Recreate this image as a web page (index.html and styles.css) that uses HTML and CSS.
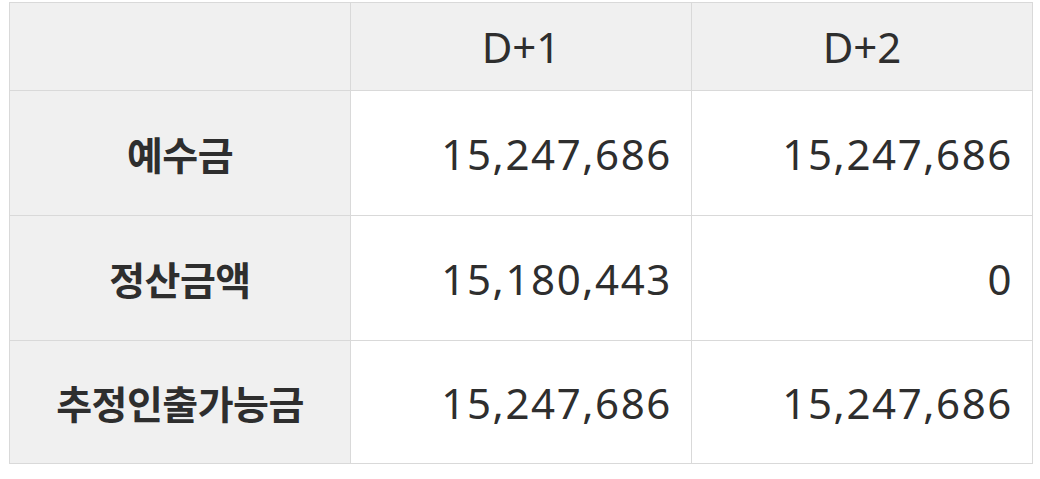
FILE: index.html
```html
<!DOCTYPE html>
<html lang="ko">
<head>
<meta charset="utf-8">
<link rel="stylesheet" href="styles.css">
</head>
<body>
<table class="balance">
  <colgroup>
    <col class="c1"><col class="c2"><col class="c3">
  </colgroup>
  <thead>
    <tr class="head">
      <th class="label"></th>
      <th>D+1</th>
      <th>D+2</th>
    </tr>
  </thead>
  <tbody>
    <tr class="row">
      <th class="label">예수금</th>
      <td>15,247,686</td>
      <td>15,247,686</td>
    </tr>
    <tr class="row">
      <th class="label">정산금액</th>
      <td>15,180,443</td>
      <td>0</td>
    </tr>
    <tr class="row last">
      <th class="label">추정인출가능금</th>
      <td>15,247,686</td>
      <td>15,247,686</td>
    </tr>
  </tbody>
</table>
</body>
</html>
```

FILE: styles.css
```css
html, body {
  margin: 0;
  padding: 0;
  background: #ffffff;
}
body {
  padding: 2px 9px 0 9px;
  font-family: "Noto Sans", "Noto Sans CJK KR", sans-serif;
  color: #2e2e2e;
}
.balance {
  border-collapse: collapse;
  width: 1023px;
  table-layout: fixed;
}
.c1, .c2, .c3 { width: 341px; }
.balance th,
.balance td {
  border: 1px solid #d9d9d9;
  padding: 0 20px;
  font-size: 42px;
  font-weight: 400;
}
.head th {
  height: 87px;
  background: #f0f0f0;
  text-align: center;
  font-weight: 400;
}
.row th,
.row td {
  height: 124px;
}
.last th,
.last td {
  height: 122px;
}
.balance .label {
  background: #f0f0f0;
  text-align: center;
  font-family: "Noto Sans CJK KR", sans-serif;
  font-weight: 700;
  font-size: 39px;
  letter-spacing: -0.5px;
}
.balance td {
  text-align: right;
  letter-spacing: 1.6px;
  padding-right: 19px;
}
```
